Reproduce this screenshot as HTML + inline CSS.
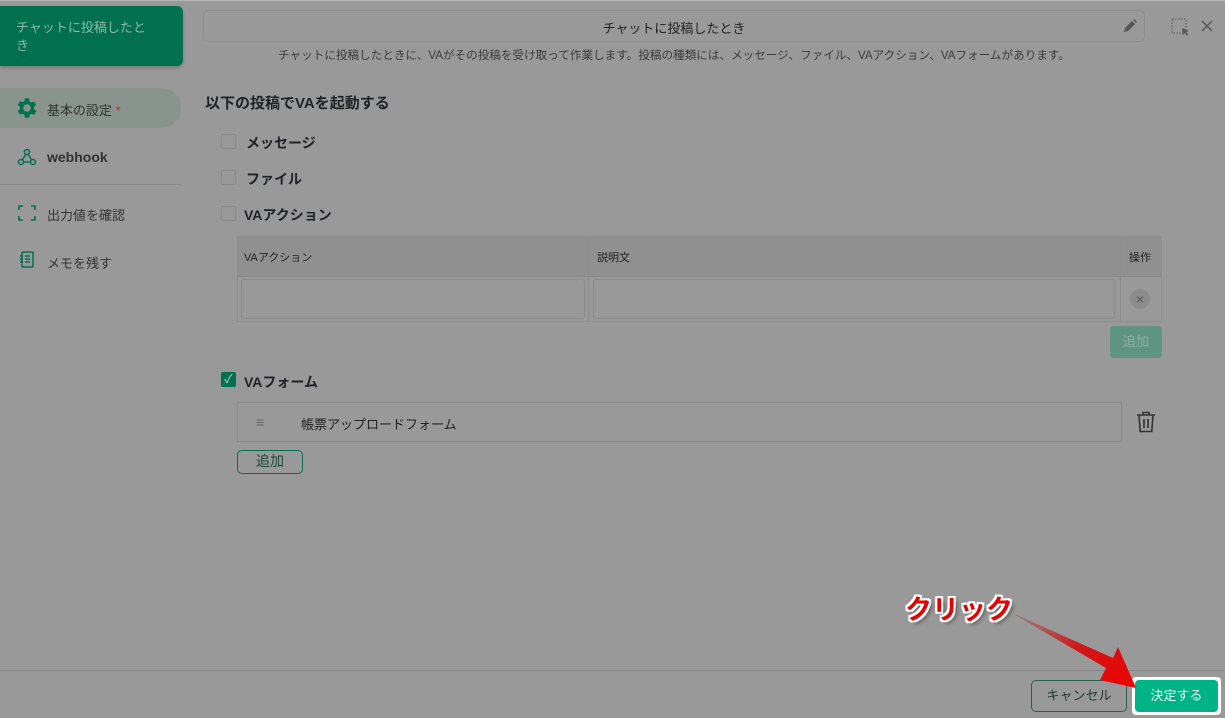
<!DOCTYPE html>
<html><head><meta charset="utf-8"><style>
*{box-sizing:border-box;margin:0;padding:0}
body{width:1225px;height:718px;background:#999999;font-family:"Liberation Sans","Noto Sans CJK JP",sans-serif;position:relative;overflow:hidden;color:#222}
.a{position:absolute}
.cb{position:absolute;width:15px;height:15px;border:1.5px solid #858a8d;border-radius:2px}
.lbl{position:absolute;font-size:14px;font-weight:bold;color:#1f2227}
</style></head><body>
<div class="a" style="left:0;top:0;width:1225px;height:1px;background:#b5b5b5"></div>
<div class="a" style="left:0;top:6px;width:183px;height:60px;background:#00704f;border-radius:0 6px 6px 0;color:#8fb9a8;font-size:13px;padding:13px 0 0 16px;line-height:18px;box-shadow:0 2px 3px rgba(0,0,0,.2)">チャットに投稿したと<br>き</div>
<div class="a" style="left:0;top:88px;width:181px;height:40px;background:#8a948f;border-radius:0 20px 20px 0"></div>
<svg class="a" style="left:14px;top:95px" width="26" height="26" viewBox="0 0 24 24"><path fill="#00704f" d="M19.4 13a7.5 7.5 0 000-2l2.1-1.6-2-3.5-2.5 1a7 7 0 00-1.7-1L15 3h-4l-.4 2.7a7 7 0 00-1.7 1l-2.5-1-2 3.5L6.6 11a7.5 7.5 0 000 2l-2.1 1.6 2 3.5 2.5-1a7 7 0 001.7 1L11 21h4l.4-2.7a7 7 0 001.7-1l2.5 1 2-3.5zM13 15.5a3.5 3.5 0 110-7 3.5 3.5 0 010 7z" transform="translate(-1 0)"/></svg>
<div class="a" style="left:47px;top:100px;font-size:13px;color:#333">基本の設定 <span style="color:#a33">*</span></div>
<svg class="a" style="left:17px;top:147px" width="20" height="20" viewBox="0 0 20 20" fill="none" stroke="#00704f" stroke-width="1.5"><circle cx="10" cy="5" r="2.5"/><circle cx="4" cy="15" r="2.5"/><circle cx="16" cy="15" r="2.5"/><path d="M8.8 7.2L5.5 12.8M11.2 7.2l3.3 5.6M6.5 15h7"/></svg>
<div class="a" style="left:47px;top:149px;font-size:14px;font-weight:bold;color:#333">webhook</div>
<div class="a" style="left:0;top:184px;width:181px;height:1px;background:#888"></div>
<svg class="a" style="left:18px;top:205px" width="18" height="16" viewBox="0 0 18 16" fill="none" stroke="#00704f" stroke-width="1.6"><path d="M1 5V1h4M13 1h4v4M17 11v4h-4M5 15H1v-4"/></svg>
<div class="a" style="left:47px;top:205px;font-size:13px;color:#333">出力値を確認</div>
<svg class="a" style="left:20px;top:251px" width="14" height="18" viewBox="0 0 14 18" fill="none" stroke="#00704f" stroke-width="1.5"><rect x="2" y="1" width="11" height="15" rx="1"/><path d="M5 5h5M5 8h5M5 11h5M0 5h3M0 8h3M0 11h3"/></svg>
<div class="a" style="left:47px;top:253px;font-size:13px;color:#333">メモを残す</div>

<div class="a" style="left:203px;top:10px;width:942px;height:32px;border:1px solid #8e8e8e;border-radius:5px"></div>
<div class="a" style="left:203px;top:18px;width:942px;text-align:center;font-size:13px;color:#222">チャットに投稿したとき</div>
<svg class="a" style="left:1123px;top:19px" width="14" height="14" viewBox="0 0 14 14"><path fill="#555" d="M1 13l1-4 7-7 3 3-7 7zM10 1l1-1 3 3-1 1z"/></svg>
<svg class="a" style="left:1171px;top:18px" width="20" height="20" viewBox="0 0 20 20" fill="none"><rect x="1" y="1" width="14" height="14" stroke="#555" stroke-dasharray="1.5 1.5"/><path d="M11 10l7 3-3 1 2 3-1 1-2-3-2 2z" fill="#555"/></svg>
<svg class="a" style="left:1201px;top:20px" width="12" height="12" viewBox="0 0 12 12" stroke="#555" stroke-width="1.4"><path d="M1 1l10 10M11 1L1 11"/></svg>
<div class="a" style="left:203px;top:47px;width:942px;text-align:center;font-size:11.6px;color:#3c3c3c;white-space:nowrap">チャットに投稿したときに、VAがその投稿を受け取って作業します。投稿の種類には、メッセージ、ファイル、VAアクション、VAフォームがあります。</div>

<div class="a" style="left:205px;top:92px;font-size:15px;font-weight:bold;color:#1f2227">以下の投稿でVAを起動する</div>
<div class="cb" style="left:221px;top:134px"></div><div class="lbl" style="left:246px;top:133px">メッセージ</div>
<div class="cb" style="left:221px;top:170px"></div><div class="lbl" style="left:246px;top:169px">ファイル</div>
<div class="cb" style="left:221px;top:206px"></div><div class="lbl" style="left:244px;top:205px">VAアクション</div>

<div class="a" style="left:237px;top:236px;width:925px;height:86px;border:1px solid #8e8e8e;background:#999"></div>
<div class="a" style="left:238px;top:237px;width:923px;height:40px;background:#909090;border-bottom:1px solid #8a8a8a"></div>
<div class="a" style="left:588px;top:237px;width:1px;height:84px;background:#8e8e8e"></div>
<div class="a" style="left:1120px;top:237px;width:1px;height:84px;background:#8e8e8e"></div>
<div class="a" style="left:244px;top:249px;font-size:11px;color:#222">VAアクション</div>
<div class="a" style="left:597px;top:249px;font-size:11px;color:#222">説明文</div>
<div class="a" style="left:1129px;top:249px;font-size:11px;color:#222">操作</div>
<div class="a" style="left:241px;top:279px;width:344px;height:40px;border:1px solid #8c8c8c;border-radius:3px"></div>
<div class="a" style="left:593px;top:279px;width:522px;height:40px;border:1px solid #8c8c8c;border-radius:3px"></div>
<div class="a" style="left:1130px;top:289px;width:20px;height:20px;border-radius:50%;background:#8c8c8c;color:#555;font-size:14px;text-align:center;line-height:20px">×</div>
<div class="a" style="left:1110px;top:326px;width:52px;height:32px;border-radius:4px;background:#5f9482;color:#8ab0a3;font-size:13px;text-align:center;line-height:32px">追加</div>

<div class="a" style="left:221px;top:372px;width:15px;height:15px;background:#00704f;border-radius:2px;color:#ccc;font-size:12px;line-height:15px;text-align:center">✓</div>
<div class="lbl" style="left:244px;top:372px">VAフォーム</div>
<div class="a" style="left:237px;top:402px;width:885px;height:40px;border:1px solid #8a8a8a"></div>
<div class="a" style="left:256px;top:414px;font-size:14px;color:#666">≡</div>
<div class="a" style="left:301px;top:414px;font-size:13px;color:#222">帳票アップロードフォーム</div>
<svg class="a" style="left:1136px;top:411px" width="20" height="22" viewBox="0 0 20 22" fill="none" stroke="#333" stroke-width="1.6"><path d="M1 4h18M7 4V1.5h6V4M3 4l1.2 16.5h11.6L17 4M8 8v9M12 8v9"/></svg>
<div class="a" style="left:237px;top:450px;width:66px;height:24px;border:1.5px solid #00704f;border-radius:5px;color:#1a4a3a;font-size:14px;text-align:center;line-height:21px">追加</div>

<div class="a" style="left:0;top:670px;width:1225px;height:1px;background:#888"></div>
<div class="a" style="left:1031px;top:680px;width:96px;height:32px;border:1.5px solid #2f5d4d;border-radius:5px;color:#1c3c30;font-size:13px;text-align:center;line-height:29px">キャンセル</div>
<div class="a" style="left:1132px;top:677px;width:89px;height:38px;background:#fff;border-radius:4px"></div>
<div class="a" style="left:1135px;top:680px;width:83px;height:32px;background:#00b386;border-radius:4px;color:#e8f7f1;font-size:13px;text-align:center;line-height:32px">決定する</div>

<svg class="a" style="left:1000px;top:600px" width="150" height="100" viewBox="0 0 150 100"><defs><linearGradient id="g" x1="0" y1="0" x2="1" y2="1"><stop offset="0" stop-color="#b03030" stop-opacity=".2"/><stop offset="0.5" stop-color="#d01818"/><stop offset="1" stop-color="#ee0000"/></linearGradient></defs><path d="M10 12L113 58 118 47 136 88 100 80 106 68z" fill="url(#g)"/></svg>
<div class="a" style="left:905px;top:588px;font-size:27px;font-weight:bold;color:#e50000;text-shadow:-2px -2px 0 #fff,2px -2px 0 #fff,-2px 2px 0 #fff,2px 2px 0 #fff,0 2px 0 #fff,0 -2px 0 #fff,2px 0 0 #fff,-2px 0 0 #fff,3px 3px 4px rgba(0,0,0,.5)">クリック</div>
</body></html>
